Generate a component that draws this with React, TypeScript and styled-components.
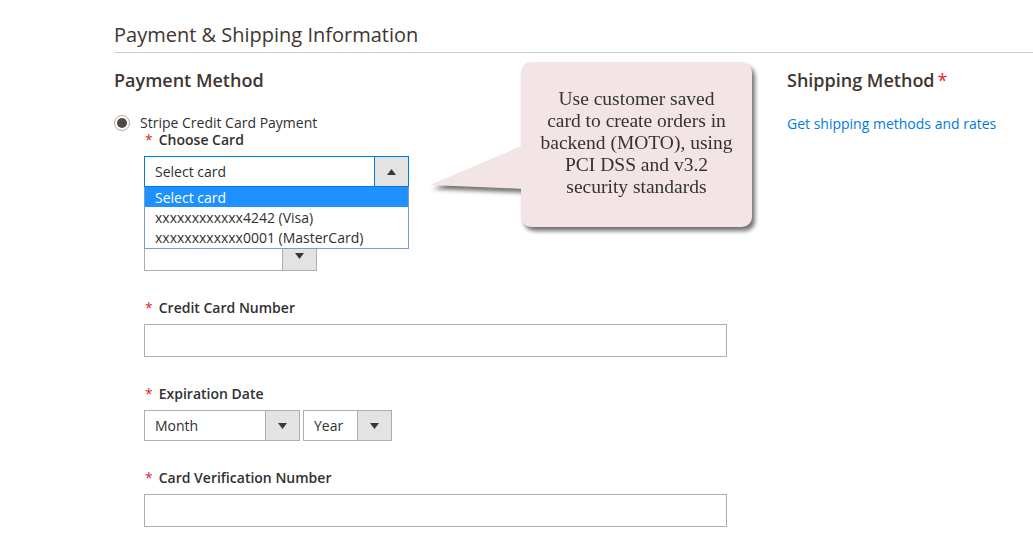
import styled, { createGlobalStyle } from 'styled-components';

const GlobalStyle = createGlobalStyle`
  html, body {
    margin: 0;
    padding: 0;
    background: #fff;
  }
  body {
    font-family: 'Open Sans', 'Liberation Sans', sans-serif;
    color: #303030;
    overflow: hidden;
  }
`;

function ArrowIcon({ up }: { up?: boolean }) {
  return (
    <svg width="9" height="6" viewBox="0 0 9 6">
      {up ? <polygon points="0,6 4.5,0 9,6" fill="#41362f" /> : <polygon points="0,0 9,0 4.5,6" fill="#41362f" />}
    </svg>
  );
}

function Select(props: { width: number; value?: string; open?: boolean }) {
  const { width, value, open } = props;
  return (
    <SelectBox $width={width} $open={open}>
      <SelectValue>{value}</SelectValue>
      <ArrowBox $open={open}>
        <ArrowIcon up={open} />
      </ArrowBox>
    </SelectBox>
  );
}

export default function App() {
  return (
    <Page>
      <GlobalStyle />
      <SectionTitle>Payment &amp; Shipping Information</SectionTitle>
      <Columns>
        <PaymentColumn>
          <Heading>Payment Method</Heading>
          <RadioRow>
            <Radio />
            <span>Stripe Credit Card Payment</span>
          </RadioRow>
          <Fields>
            <Field $gap={0}>
              <Label>Choose Card</Label>
              <DropdownWrap>
                <Select width={265} value="Select card" open />
                <OptionList>
                  <Option $active>Select card</Option>
                  <Option>xxxxxxxxxxxx4242 (Visa)</Option>
                  <Option>xxxxxxxxxxxx0001 (MasterCard)</Option>
                </OptionList>
              </DropdownWrap>
            </Field>
            {/* covered by the open dropdown above */}
            <Field $gap={28}>
              <Label $hidden aria-hidden>
                Credit Card Type
              </Label>
              <Select width={173} />
            </Field>
            <Field>
              <Label>Credit Card Number</Label>
              <TextInput />
            </Field>
            <Field>
              <Label>Expiration Date</Label>
              <SelectRow>
                <Select width={156} value="Month" />
                <Select width={89} value="Year" />
              </SelectRow>
            </Field>
            <Field>
              <Label>Card Verification Number</Label>
              <TextInput />
            </Field>
          </Fields>
        </PaymentColumn>
        <ShippingColumn>
          <Heading>
            Shipping Method<Req>*</Req>
          </Heading>
          <Link>Get shipping methods and rates</Link>
        </ShippingColumn>
      </Columns>

      <Callout>
        <Tail width="96" height="130" viewBox="0 0 96 130">
          <polygon points="96,82 0,123 96,127" fill="#f3e4e5" />
        </Tail>
        <Bubble>
          Use customer saved
          <br />
          card to create orders in
          <br />
          backend (MOTO), using
          <br />
          PCI DSS and v3.2
          <br />
          security standards
        </Bubble>
      </Callout>
    </Page>
  );
}

const Page = styled.div`
  position: relative;
  width: 1033px;
  height: 534px;
  padding-left: 114px;
  box-sizing: border-box;
`;

const SectionTitle = styled.div`
  margin: 0;
  padding-top: 21px;
  padding-bottom: 3px;
  font-size: 20px;
  line-height: 28px;
  color: #41362f;
  border-bottom: 1px solid #cccccc;
`;

const Columns = styled.div`
  display: flex;
`;

const PaymentColumn = styled.div`
  width: 673px;
`;

const ShippingColumn = styled.div`
  flex: 1;
`;

const Heading = styled.div`
  margin-top: 15px;
  font-size: 18px;
  line-height: 24px;
  font-weight: 600;
  color: #41362f;
`;

const Req = styled.span`
  color: #e22626;
  font-weight: 400;
  margin-left: 3px;
`;

const Link = styled.div`
  margin-top: 22px;
  font-size: 14px;
  line-height: 20px;
  color: #007bdb;
`;

const RadioRow = styled.div`
  margin-top: 23px;
  display: flex;
  align-items: center;
  gap: 10px;
  font-size: 14px;
  line-height: 16px;
  height: 16px;
`;

const Radio = styled.span`
  width: 16px;
  height: 16px;
  box-sizing: border-box;
  border-radius: 50%;
  border: 1px solid #adadad;
  background: #fff;
  display: flex;
  align-items: center;
  justify-content: center;
  &::after {
    content: '';
    width: 10px;
    height: 10px;
    border-radius: 50%;
    background: #514943;
  }
`;

const Fields = styled.div`
  padding-left: 30px;
`;

const Field = styled.div<{ $gap?: number }>`
  margin-top: ${(p) => (p.$gap ?? 28)}px;
`;

const Label = styled.div<{ $hidden?: boolean }>`
  font-size: 14px;
  line-height: 17px;
  font-weight: 600;
  color: #303030;
  margin-bottom: 8px;
  visibility: ${(p) => (p.$hidden ? 'hidden' : 'visible')};
  &::before {
    content: '*';
    color: #e22626;
    font-weight: 400;
    margin-left: 1px;
    margin-right: 6px;
  }
`;

const DropdownWrap = styled.div`
  position: relative;
  z-index: 2;
`;

const SelectBox = styled.div<{ $width: number; $open?: boolean }>`
  width: ${(p) => p.$width}px;
  height: 31px;
  box-sizing: border-box;
  border: 1px solid ${(p) => (p.$open ? '#007bdb' : '#adadad')};
  background: #fff;
  display: flex;
  align-items: stretch;
`;

const SelectValue = styled.div`
  flex: 1;
  padding-left: 10px;
  font-size: 14px;
  line-height: 30px;
  color: #303030;
`;

const ArrowBox = styled.div<{ $open?: boolean }>`
  width: 33px;
  background: #e3e3e3;
  border-left: 1px solid ${(p) => (p.$open ? '#007bdb' : '#adadad')};
  display: flex;
  align-items: center;
  justify-content: center;
`;

const SelectRow = styled.div`
  display: flex;
  gap: 3px;
`;

const OptionList = styled.div`
  position: absolute;
  top: 31px;
  left: 0;
  width: 265px;
  box-sizing: border-box;
  border: 1px solid #7a9cd3;
  border-top: none;
  background: #fff;
  padding-bottom: 1px;
`;

const Option = styled.div<{ $active?: boolean }>`
  height: 20px;
  line-height: 21px;
  padding-left: 10px;
  font-size: 14px;
  color: ${(p) => (p.$active ? '#fff' : '#303030')};
  background: ${(p) => (p.$active ? '#1e90ff' : 'transparent')};
`;

const TextInput = styled.div`
  width: 583px;
  height: 33px;
  box-sizing: border-box;
  border: 1px solid #adadad;
  background: #fff;
`;

const Callout = styled.div`
  position: absolute;
  left: 430px;
  top: 62px;
  width: 322px;
  height: 165px;
  z-index: 3;
  filter: drop-shadow(3px 4px 2px rgba(0, 0, 0, 0.55));
`;

const Tail = styled.svg`
  position: absolute;
  left: 0;
  top: 0;
`;

const Bubble = styled.div`
  position: absolute;
  left: 91px;
  top: 0;
  width: 231px;
  height: 165px;
  box-sizing: border-box;
  padding-top: 26px;
  border-radius: 10px;
  background: #f3e4e5;
  font-family: 'Liberation Serif', 'Times New Roman', serif;
  font-size: 19.5px;
  line-height: 22px;
  color: #333;
  text-align: center;
  white-space: nowrap;
`;
